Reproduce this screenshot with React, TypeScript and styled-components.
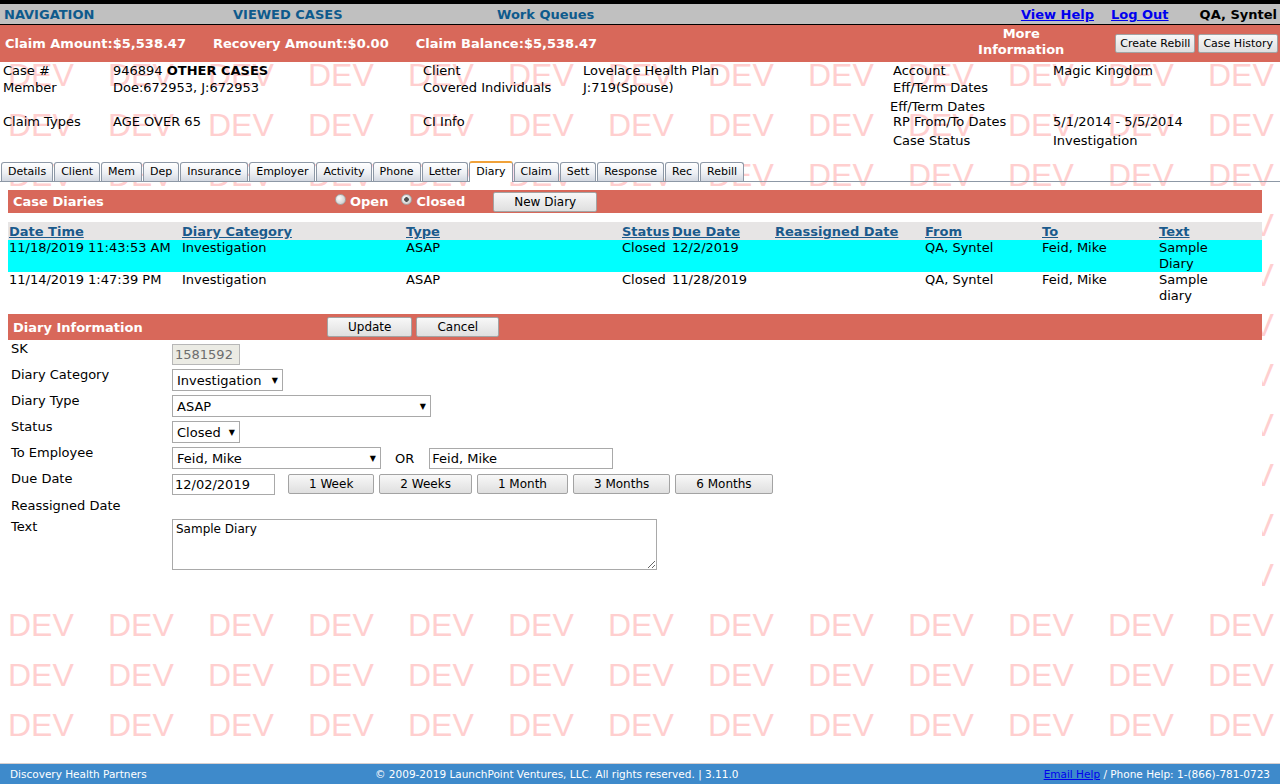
import React from 'react';
import styled, { createGlobalStyle } from 'styled-components';

const GlobalStyle = createGlobalStyle`
	html, body {
		margin: 0;
		padding: 0;
		background: #fff;
	}
	body {
		font-family: 'DejaVu Sans', Verdana, sans-serif;
		font-size: 13px;
		color: #000;
	}
	* {
		box-sizing: border-box;
	}
`;

const ORANGE = '#d8685a';

const Page = styled.div`
	position: relative;
	isolation: isolate;
	min-height: 784px;
	display: flex;
	flex-direction: column;
	overflow: hidden;
`;

// tiled DEV watermark behind everything
const Watermark = styled.div`
	position: absolute;
	inset: 0;
	z-index: -1;
	display: grid;
	grid-template-columns: repeat(13, 100px);
	grid-auto-rows: 50px;
	overflow: hidden;
	pointer-events: none;
`;
const WatermarkText = styled.span`
	font-family: 'Liberation Sans', Arial, sans-serif;
	font-size: 32px;
	line-height: 50px;
	padding-left: 8px;
	color: #ffcfcf;
	user-select: none;
`;

const NavBar = styled.div`
	display: flex;
	align-items: center;
	height: 25px;
	padding: 0 3px 0 4px;
	background: #c0c0c0;
	border-top: 4px solid #000;
	border-bottom: 1px solid #000;
	font-weight: bold;
`;
const NavItem = styled.span<{ $w?: number }>`
	width: ${p => (p.$w ? `${p.$w}px` : 'auto')};
	color: #0e5a8c;
`;
const Spacer = styled.div`
	flex: 1;
`;
const TopLink = styled.a<{ $mr: number }>`
	color: #0000ee;
	text-decoration: underline;
	margin-right: ${p => p.$mr}px;
`;
const UserName = styled.span`
	color: #000;
`;

const AmountBar = styled.div`
	display: flex;
	align-items: center;
	height: 37px;
	padding: 0 2px 0 5px;
	background: ${ORANGE};
	color: #fff;
	font-weight: bold;
`;
const AmountGroup = styled.div`
	display: flex;
	gap: 27px;
`;
const MoreInfo = styled.div`
	text-align: center;
	line-height: 16px;
	margin: -3px 51px 0 0;
`;
const ButtonRow = styled.div<{ $gap: number; $ml?: number }>`
	display: flex;
	align-items: center;
	gap: ${p => p.$gap}px;
	margin-left: ${p => p.$ml || 0}px;
`;
const Button = styled.button<{ $small?: boolean }>`
	height: ${p => (p.$small ? 19 : 20)}px;
	padding: 0 ${p => (p.$small ? 4 : 20)}px;
	font-family: 'DejaVu Sans', Verdana, sans-serif;
	font-size: ${p => (p.$small ? 11 : 12)}px;
	color: #000;
	background: linear-gradient(#f8f8f8, #dfdfdf);
	border: 1px solid #a3a3a3;
	border-radius: 2px;
	white-space: nowrap;
`;

const InfoGrid = styled.div`
	display: grid;
	grid-template-columns: 110px 310px 160px 310px 160px 1fr;
	grid-template-rows: 17px 19px 15px 19px 18px;
	padding-left: 3px;
	line-height: 18px;
`;
const InfoCell = styled.div<{ $shift?: boolean }>`
	white-space: nowrap;
	margin-left: ${p => (p.$shift ? -3 : 0)}px;
`;

const TabBar = styled.div`
	display: flex;
	align-items: flex-end;
	height: 21px;
	margin-top: 11px;
	padding-left: 1px;
	border-bottom: 1px solid #8d98a6;
`;
const Tab = styled.div<{ $active?: boolean }>`
	height: ${p => (p.$active ? 21 : 19)}px;
	margin-right: 1px;
	margin-bottom: ${p => (p.$active ? -1 : 0)}px;
	padding: 0 6px;
	font-size: 11px;
	line-height: 18px;
	border: 1px solid #8d98a6;
	border-bottom: none;
	border-top: ${p => (p.$active ? '2px solid #f0a23a' : '1px solid #8d98a6')};
	border-radius: 3px 3px 0 0;
	background: ${p =>
		p.$active ? '#fff' : 'linear-gradient(#ffffff, #eef0f4 55%, #d3d8e1)'};
	white-space: nowrap;
`;

const Panel = styled.div`
	margin: 8px 18px 0 8px;
	padding-bottom: 18px;
	background: #fff;
`;
const SectionBar = styled.div<{ $h: number; $mt?: number }>`
	display: flex;
	align-items: center;
	height: ${p => p.$h}px;
	margin-top: ${p => p.$mt || 0}px;
	padding-left: 5px;
	background: ${ORANGE};
	color: #fff;
	font-weight: bold;
`;
const SectionTitle = styled.span<{ $w: number }>`
	width: ${p => p.$w}px;
`;
const RadioLabel = styled.label`
	display: flex;
	align-items: center;
	margin-right: 13px;
`;
const Radio = styled.span<{ $checked?: boolean }>`
	width: 11px;
	height: 11px;
	margin: 0 4px 5px 0;
	border-radius: 50%;
	border: 1px solid #a5a5a5;
	background: ${p =>
		p.$checked
			? 'radial-gradient(circle, #505050 0 2px, transparent 2.6px), radial-gradient(circle at 35% 35%, #fbfbfb, #c4c4c4)'
			: 'radial-gradient(circle at 35% 35%, #fbfbfb, #c4c4c4)'};
`;

const Table = styled.div`
	display: grid;
	grid-template-columns: 173px 224px 216px 50px 103px 150px 117px 117px 1fr;
	margin-top: 9px;
`;
const HeadCell = styled.a`
	height: 18px;
	line-height: 19px;
	padding-left: 1px;
	background: #e7e5e5;
	color: #1a5a8c;
	font-weight: bold;
	text-decoration: underline;
	white-space: nowrap;
`;
const Cell = styled.div<{ $hl?: boolean; $narrow?: boolean }>`
	min-height: 32px;
	line-height: 16px;
	padding: 0 ${p => (p.$narrow ? 40 : 0)}px 0 1px;
	background: ${p => (p.$hl ? '#00ffff' : '#fff')};
	white-space: ${p => (p.$narrow ? 'normal' : 'nowrap')};
`;

const Form = styled.div`
	display: grid;
	grid-template-columns: 164px 1fr;
	padding-top: 1px;
`;
const FormLabel = styled.div<{ $pt?: number }>`
	padding: ${p => p.$pt || 0}px 0 0 3px;
	line-height: 16px;
`;
const FormValue = styled.div<{ $h?: number }>`
	display: flex;
	align-items: center;
	min-height: ${p => p.$h ?? 22}px;
	padding: 2px 0;
	box-sizing: content-box;
`;
const TextInput = styled.input<{ $w: number; $disabled?: boolean }>`
	width: ${p => p.$w}px;
	height: 21px;
	padding: 0 2px;
	font-family: 'DejaVu Sans', Verdana, sans-serif;
	font-size: 13px;
	color: ${p => (p.$disabled ? '#6d6d6d' : '#000')};
	background: ${p => (p.$disabled ? '#ebebe4' : '#fff')};
	border: 1px solid ${p => (p.$disabled ? '#b7b7b7' : '#a9a9a9')};
	outline: none;
`;
const SelectBox = styled.div<{ $w: number }>`
	display: flex;
	align-items: center;
	justify-content: space-between;
	width: ${p => p.$w}px;
	height: 22px;
	padding: 0 4px;
	border: 1px solid #a9a9a9;
	background: #fff;
	white-space: nowrap;
	overflow: hidden;
`;
const Arrow = styled.span`
	font-size: 8px;
	margin-left: 4px;
`;
const OrText = styled.span`
	margin: 0 15px 0 14px;
`;
const TextArea = styled.textarea`
	width: 485px;
	height: 51px;
	padding: 2px 3px;
	font-family: 'DejaVu Sans', Verdana, sans-serif;
	font-size: 12px;
	border: 1px solid #a9a9a9;
	outline: none;
`;

const Footer = styled.div`
	display: grid;
	grid-template-columns: 365px 1fr auto;
	align-items: center;
	height: 21px;
	margin-top: auto;
	padding: 0 10px;
	background: #3e8acb;
	border-top: 1px solid #d6cfcf;
	color: #fff;
	font-size: 10.5px;
	white-space: nowrap;
`;
const FooterLink = styled.a`
	color: #0000ee;
	text-decoration: underline;
`;

const tabs = ['Details', 'Client', 'Mem', 'Dep', 'Insurance', 'Employer', 'Activity', 'Phone', 'Letter', 'Diary', 'Claim', 'Sett', 'Response', 'Rec', 'Rebill'];

const columns = ['Date Time', 'Diary Category', 'Type', 'Status', 'Due Date', 'Reassigned Date', 'From', 'To', 'Text'];

const diaries = [
	{ date: '11/18/2019 11:43:53 AM', category: 'Investigation', type: 'ASAP', status: 'Closed', due: '12/2/2019', reassigned: '', from: 'QA, Syntel', to: 'Feid, Mike', text: 'Sample Diary', selected: true },
	{ date: '11/14/2019 1:47:39 PM', category: 'Investigation', type: 'ASAP', status: 'Closed', due: '11/28/2019', reassigned: '', from: 'QA, Syntel', to: 'Feid, Mike', text: 'Sample diary', selected: false },
];

const dueButtons = ['1 Week', '2 Weeks', '1 Month', '3 Months', '6 Months'];

const App = () => {
	return (
		<Page>
			<GlobalStyle />
			<Watermark>
				{Array.from({ length: 13 * 16 }).map((_, i) => (
					<WatermarkText key={i}>DEV</WatermarkText>
				))}
			</Watermark>

			{/* top navigation */}
			<NavBar>
				<NavItem $w={229}>NAVIGATION</NavItem>
				<NavItem $w={264}>VIEWED CASES</NavItem>
				<NavItem>Work Queues</NavItem>
				<Spacer />
				<TopLink href="#" $mr={17}>View Help</TopLink>
				<TopLink href="#" $mr={31}>Log Out</TopLink>
				<UserName>QA, Syntel</UserName>
			</NavBar>

			{/* claim amounts */}
			<AmountBar>
				<AmountGroup>
					<span>Claim Amount:$5,538.47</span>
					<span>Recovery Amount:$0.00</span>
					<span>Claim Balance:$5,538.47</span>
				</AmountGroup>
				<Spacer />
				<MoreInfo>
					More
					<br />
					Information
				</MoreInfo>
				<ButtonRow $gap={3}>
					<Button $small>Create Rebill</Button>
					<Button $small>Case History</Button>
				</ButtonRow>
			</AmountBar>

			{/* case summary */}
			<InfoGrid>
				<InfoCell>Case #</InfoCell>
				<InfoCell>
					946894 <b>OTHER CASES</b>
				</InfoCell>
				<InfoCell>Client</InfoCell>
				<InfoCell>Lovelace Health Plan</InfoCell>
				<InfoCell>Account</InfoCell>
				<InfoCell>Magic Kingdom</InfoCell>

				<InfoCell>Member</InfoCell>
				<InfoCell>Doe:672953, J:672953</InfoCell>
				<InfoCell>Covered Individuals</InfoCell>
				<InfoCell>J:719(Spouse)</InfoCell>
				<InfoCell>Eff/Term Dates</InfoCell>
				<InfoCell />

				<InfoCell />
				<InfoCell />
				<InfoCell />
				<InfoCell />
				<InfoCell $shift>Eff/Term Dates</InfoCell>
				<InfoCell />

				<InfoCell>Claim Types</InfoCell>
				<InfoCell>AGE OVER 65</InfoCell>
				<InfoCell>CI Info</InfoCell>
				<InfoCell />
				<InfoCell>RP From/To Dates</InfoCell>
				<InfoCell>5/1/2014 - 5/5/2014</InfoCell>

				<InfoCell />
				<InfoCell />
				<InfoCell />
				<InfoCell />
				<InfoCell>Case Status</InfoCell>
				<InfoCell>Investigation</InfoCell>
			</InfoGrid>

			<TabBar>
				{tabs.map(t => (
					<Tab key={t} $active={t === 'Diary'}>
						{t}
					</Tab>
				))}
			</TabBar>

			<Panel>
				{/* case diaries list */}
				<SectionBar $h={23}>
					<SectionTitle $w={322}>Case Diaries</SectionTitle>
					<RadioLabel>
						<Radio />
						Open
					</RadioLabel>
					<RadioLabel>
						<Radio $checked />
						Closed
					</RadioLabel>
					<ButtonRow $gap={0} $ml={15}>
						<Button>New Diary</Button>
					</ButtonRow>
				</SectionBar>

				<Table>
					{columns.map(c => (
						<HeadCell key={c} href="#">
							{c}
						</HeadCell>
					))}
					{diaries.map(d => (
						<React.Fragment key={d.date}>
							<Cell $hl={d.selected}>{d.date}</Cell>
							<Cell $hl={d.selected}>{d.category}</Cell>
							<Cell $hl={d.selected}>{d.type}</Cell>
							<Cell $hl={d.selected}>{d.status}</Cell>
							<Cell $hl={d.selected}>{d.due}</Cell>
							<Cell $hl={d.selected}>{d.reassigned}</Cell>
							<Cell $hl={d.selected}>{d.from}</Cell>
							<Cell $hl={d.selected}>{d.to}</Cell>
							<Cell $hl={d.selected} $narrow>
								{d.text}
							</Cell>
						</React.Fragment>
					))}
				</Table>

				{/* diary edit form */}
				<SectionBar $h={26} $mt={10}>
					<SectionTitle $w={314}>Diary Information</SectionTitle>
					<ButtonRow $gap={4}>
						<Button>Update</Button>
						<Button>Cancel</Button>
					</ButtonRow>
				</SectionBar>

				<Form>
					<FormLabel>SK</FormLabel>
					<FormValue>
						<TextInput $w={68} $disabled value="1581592" readOnly />
					</FormValue>

					<FormLabel>Diary Category</FormLabel>
					<FormValue>
						<SelectBox $w={111}>
							Investigation<Arrow>▼</Arrow>
						</SelectBox>
					</FormValue>

					<FormLabel>Diary Type</FormLabel>
					<FormValue>
						<SelectBox $w={259}>
							ASAP<Arrow>▼</Arrow>
						</SelectBox>
					</FormValue>

					<FormLabel>Status</FormLabel>
					<FormValue>
						<SelectBox $w={68}>
							Closed<Arrow>▼</Arrow>
						</SelectBox>
					</FormValue>

					<FormLabel>To Employee</FormLabel>
					<FormValue>
						<SelectBox $w={209}>
							Feid, Mike<Arrow>▼</Arrow>
						</SelectBox>
						<OrText>OR</OrText>
						<TextInput $w={184} value="Feid, Mike" readOnly />
					</FormValue>

					<FormLabel>Due Date</FormLabel>
					<FormValue>
						<TextInput $w={103} value="12/02/2019" readOnly />
						<ButtonRow $gap={5} $ml={13}>
							{dueButtons.map(b => (
								<Button key={b}>{b}</Button>
							))}
						</ButtonRow>
					</FormValue>

					<FormLabel $pt={1}>Reassigned Date</FormLabel>
					<FormValue $h={16} />

					<FormLabel $pt={2}>Text</FormLabel>
					<FormValue>
						<TextArea value="Sample Diary" readOnly />
					</FormValue>
				</Form>
			</Panel>

			<Footer>
				<span>Discovery Health Partners</span>
				<span>© 2009-2019 LaunchPoint Ventures, LLC. All rights reserved. | 3.11.0</span>
				<span>
					<FooterLink href="#">Email Help</FooterLink> / Phone Help: 1-(866)-781-0723
				</span>
			</Footer>
		</Page>
	);
};

export default App;
